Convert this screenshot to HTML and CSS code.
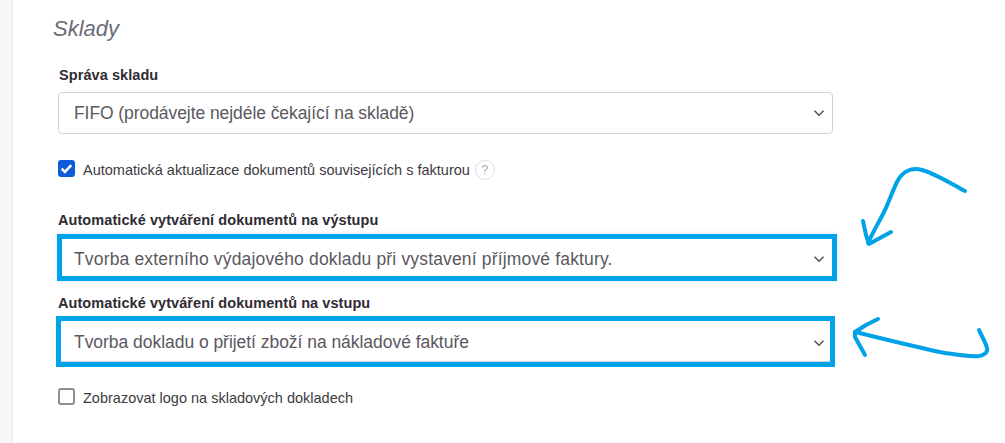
FILE: index.html
```html
<!DOCTYPE html>
<html lang="cs">
<head>
  <meta charset="UTF-8" />
  <title>Sklady</title>
  <link rel="stylesheet" href="styles.css">
</head>
<body>

  <div class="page">
    <div class="side-strip"></div>

    <div class="content">
      <h2 class="title">Sklady</h2>

      <div class="field field-stock">
        <label class="field-label">Správa skladu</label>
        <div class="select select-stock">
          <span>FIFO (prodávejte nejdéle čekající na skladě)</span>
          <svg class="chevron" viewBox="0 0 12 8"><path d="M1.5 1.8l4.5 4.4 4.5-4.4"/></svg>
        </div>
      </div>

      <div class="check-row check-update">
        <span class="check check-on">
          <svg viewBox="0 0 16 16"><path d="M3.5 8.2l3 3 6-6.4"/></svg>
        </span>
        <span class="check-text">Automatická aktualizace dokumentů souvisejících s fakturou</span>
        <span class="help">?</span>
      </div>

      <div class="field field-out">
        <label class="field-label">Automatické vytváření dokumentů na výstupu</label>
        <div class="select select-marked select-out">
          <span>Tvorba externího výdajového dokladu při vystavení příjmové faktury.</span>
          <svg class="chevron" viewBox="0 0 12 8"><path d="M1.5 1.8l4.5 4.4 4.5-4.4"/></svg>
        </div>
      </div>

      <div class="field field-in">
        <label class="field-label">Automatické vytváření dokumentů na vstupu</label>
        <div class="select select-marked select-in">
          <span>Tvorba dokladu o přijetí zboží na nákladové faktuře</span>
          <svg class="chevron" viewBox="0 0 12 8"><path d="M1.5 1.8l4.5 4.4 4.5-4.4"/></svg>
        </div>
      </div>

      <div class="check-row check-logo">
        <span class="check"></span>
        <span class="check-text">Zobrazovat logo na skladových dokladech</span>
      </div>
    </div>

    <!-- hand drawn arrows on top of the form -->
    <svg class="arrows" viewBox="0 0 1005 443">
      <path d="M965 191C950 183 934 173 922 170C911 167 902 172 897 182C892 192 889 202 884 212C879 222 873 232 868 243"/>
      <path d="M863 221L866 235L869 244L880 238L891 232"/>
      <path d="M979 330C982 337 986 343 987 348C988 352 985 355 979 356C970 357 958 355 945 353C915 347 885 339 855 332"/>
      <path d="M878 319L866 325L855 332L855 337L860 346L865 355"/>
    </svg>
  </div>

</body>
</html>
```

FILE: styles.css
```css
/* page */
body {
  margin: 0;
  background: #fff;
  font-family: "Liberation Sans", Arial, sans-serif;
  color: #333;
}

.page {
  position: relative;
  display: flex;
  width: 1005px;
  height: 443px;
  overflow: hidden;
}

.side-strip {
  width: 12px;
  flex: none;
  background: #f7f7f8;
  border-right: 1px solid #e3e9ef;
}

.content {
  display: flex;
  flex-direction: column;
  align-items: flex-start;
  padding-left: 44px;
  width: 790px;
}

.title {
  margin: 15px 0 0 -4px;
  font-size: 22px;
  line-height: 28px;
  font-weight: normal;
  font-style: italic;
  color: #6a6c75;
}

/* form fields */
.field-label {
  display: block;
  font-size: 14.5px;
  line-height: 17px;
  font-weight: bold;
  letter-spacing: 0.07px;
  color: #2f2c33;
}

.field-stock { margin-top: 24px; }
.field-stock .field-label { margin: 0 0 8px 2px; }

.field-out { margin-top: 34px; }
.field-out .field-label { margin-left: 1px; margin-bottom: 5px; }

.field-in { margin-top: 14px; }
.field-in .field-label { margin-left: 1px; margin-bottom: 4px; }

.select {
  display: flex;
  align-items: center;
  justify-content: space-between;
  box-sizing: border-box;
  width: 775px;
  height: 42px;
  margin-left: 1px;
  padding: 0 7px 0 15px;
  border: 1px solid #ced4da;
  border-radius: 4px;
  background: #fff;
  font-size: 17.5px;
  color: #5b5860;
}
.select-stock { letter-spacing: -0.07px; }

.chevron {
  width: 12px;
  height: 8px;
  fill: none;
  stroke: #55535a;
  stroke-width: 1.6;
}

/* the blue marks around the two selects */
.select-marked {
  border: 5px solid #00a2e8;
  border-radius: 0;
  margin-left: 0;
  padding-left: 12px;
}
.select-out {
  width: 780px;
  height: 47px;
  padding-top: 3px;
  letter-spacing: 0.16px;
  box-shadow: 0 0 6px rgba(120, 170, 230, 0.25);
}
.select-in {
  width: 779px;
  height: 51px;
  margin-left: -1px;
  padding-top: 2px;
  padding-left: 13px;
  padding-right: 5px;
  letter-spacing: -0.04px;
  box-shadow: inset 0 -1px 0 #ced4da;
}

/* checkboxes */
.check-row {
  display: flex;
  align-items: center;
  margin-left: 1px;
  font-size: 14.5px;
  color: #3d3a42;
}

.check-update { margin-top: 24px; height: 20px; }
.check-logo { margin-top: 19px; height: 20px; }

.check {
  display: flex;
  box-sizing: border-box;
  width: 17px;
  height: 17px;
  margin-right: 8px;
  border: 2px solid #8f8d9a;
  border-radius: 3px;
  background: #fff;
}

.check-text { margin-top: 3px; }

.check-on {
  border: none;
  background: #0b5cd7;
}
.check-on svg {
  width: 17px;
  height: 17px;
  fill: none;
  stroke: #fff;
  stroke-width: 2.4;
}

.help {
  display: flex;
  align-items: center;
  justify-content: center;
  box-sizing: border-box;
  width: 20px;
  height: 20px;
  margin: 3px 0 0 5px;
  border: 1px solid #dcdcdc;
  border-radius: 50%;
  font-size: 12px;
  color: #a5a5a5;
}

/* annotation layer */
.arrows {
  position: absolute;
  left: 0;
  top: 0;
  width: 1005px;
  height: 443px;
  fill: none;
  stroke: #00a2e8;
  stroke-width: 4;
  stroke-linecap: round;
  stroke-linejoin: round;
  pointer-events: none;
}
```
